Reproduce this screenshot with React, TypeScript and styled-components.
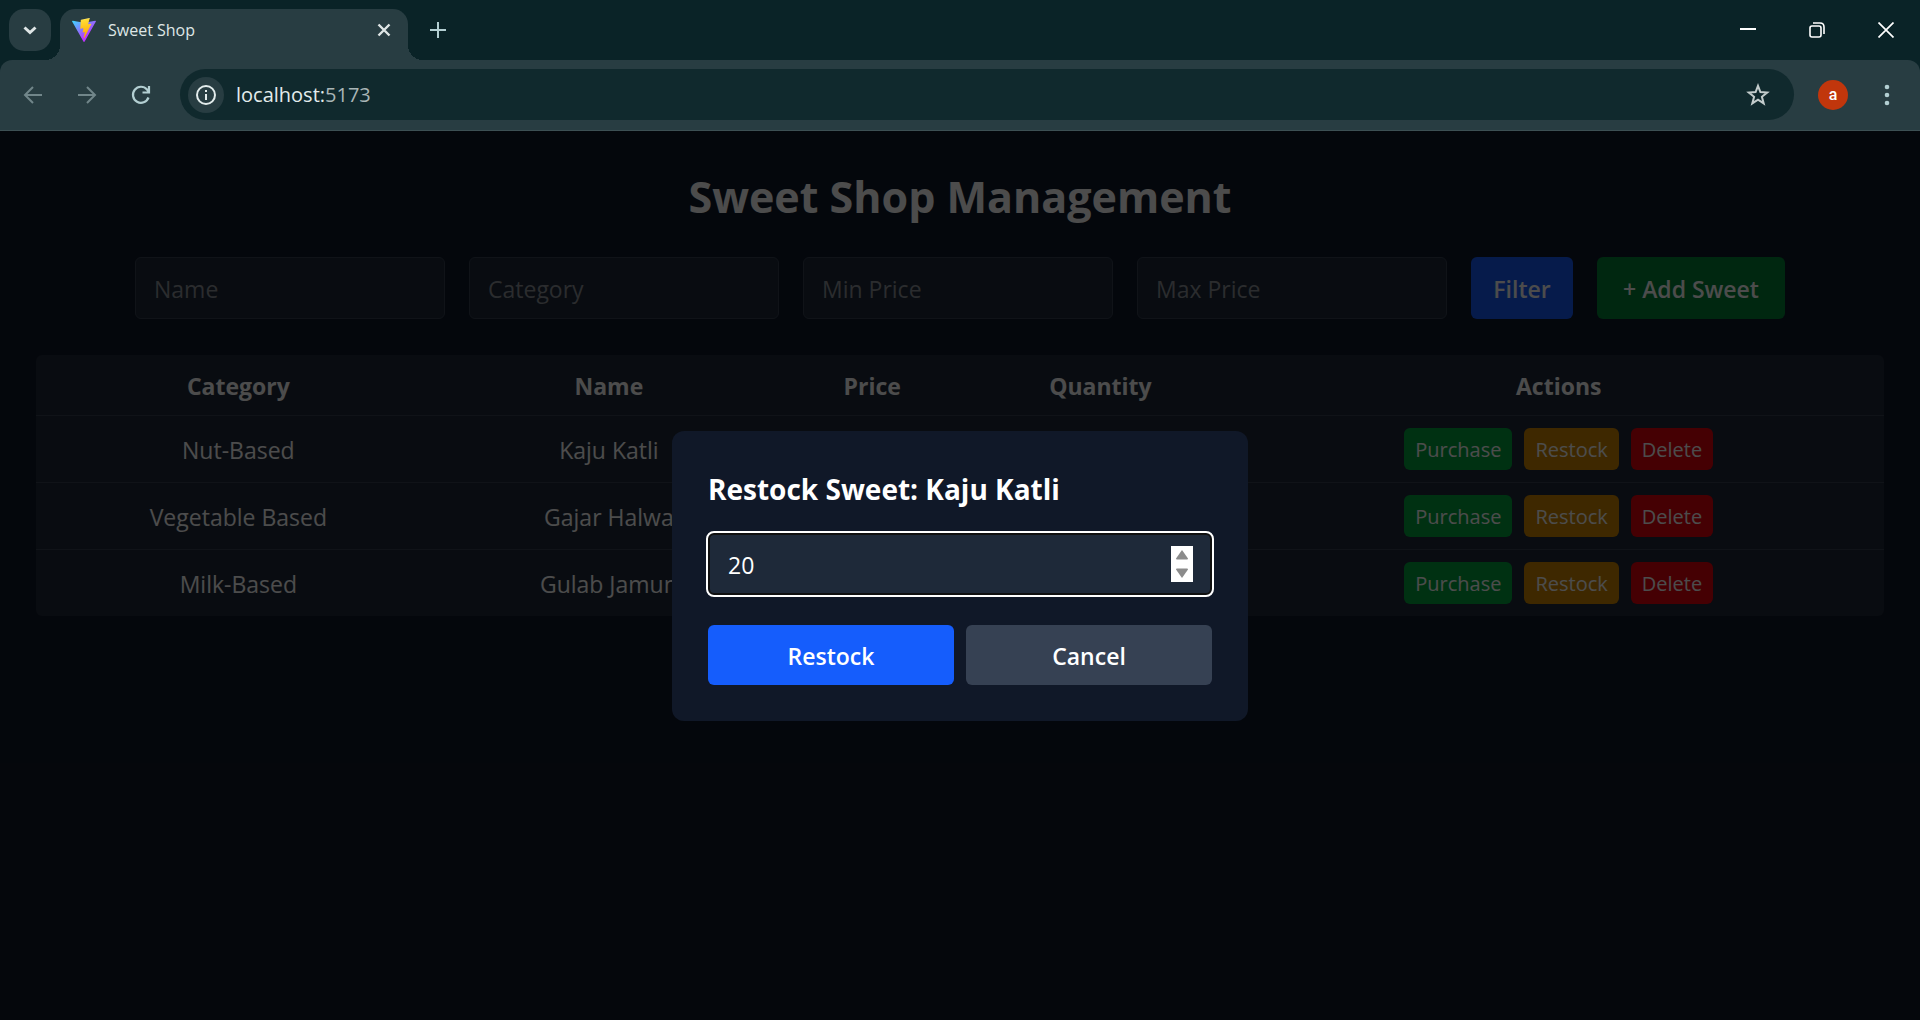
import React, { useState } from "react";
import styled, { createGlobalStyle } from "styled-components";

const GlobalStyle = createGlobalStyle`
  * { box-sizing: border-box; }
  html, body, #root { height: 100%; }
  body {
    margin: 0;
    background: #101828;
    font-family: "Open Sans", "Noto Sans", sans-serif;
  }
  button, input { font-family: inherit; }
  button { border: 0; cursor: pointer; }
`;

const Window = styled.div`
  display: flex;
  flex-direction: column;
  min-height: 100%;
`;

/* ---------- Browser frame ---------- */

const TabStrip = styled.header`
  display: flex;
  height: 60px;
  padding-left: 9px;
  background: #0a2327;
`;

const TabSearch = styled.button`
  display: grid;
  place-items: center;
  width: 42px;
  height: 42px;
  margin: 9px 9px 0 0;
  padding: 0;
  border-radius: 15px;
  background: #283d42;
`;

const Tab = styled.div`
  position: relative;
  display: flex;
  align-items: center;
  width: 348px;
  height: 51px;
  margin-top: 9px;
  padding: 0 12px 9px;
  border-radius: 15px 15px 0 0;
  background: #283d42;
  color: #dfe6e6;
  font-size: 16px;

  &::before,
  &::after {
    content: "";
    position: absolute;
    bottom: 0;
    width: 15px;
    height: 15px;
  }
  &::before {
    right: 100%;
    background: radial-gradient(circle at 0 0, transparent 15px, #283d42 15px);
  }
  &::after {
    left: 100%;
    background: radial-gradient(circle at 100% 0, transparent 15px, #283d42 15px);
  }
`;

const TabTitle = styled.span`
  flex: 1;
  margin-left: 12px;
  line-height: 24px;
`;

const PlainButton = styled.button<{ $size: number }>`
  display: grid;
  place-items: center;
  width: ${(p) => p.$size}px;
  height: ${(p) => p.$size}px;
  padding: 0;
  border-radius: 50%;
  background: transparent;
`;

const NewTabSlot = styled.div`
  display: flex;
  margin: 9px auto 0 9px;
`;

const WindowControl = styled.button`
  display: grid;
  place-items: center;
  width: 69px;
  height: 60px;
  padding: 0;
  background: transparent;
`;

const ToolbarBack = styled.div`
  background: #0a2327;
`;

const Toolbar = styled.nav`
  display: flex;
  align-items: center;
  gap: 12px;
  height: 71px;
  padding: 0 12px 1px;
  border-bottom: 1px solid #3d5054;
  border-radius: 12px 12px 0 0;
  background: #283d42;
`;

const AddressBar = styled.div`
  display: flex;
  flex: 1;
  align-items: center;
  height: 51px;
  margin-left: 6px;
  padding: 0 15px 0 8px;
  border-radius: 26px;
  background: #10292d;
`;

const SiteInfo = styled.button`
  display: grid;
  place-items: center;
  width: 36px;
  height: 36px;
  padding: 0;
  border-radius: 50%;
  background: #283d42;
`;

const Url = styled.span`
  flex: 1;
  margin-left: 12px;
  color: #e3ecec;
  font-size: 20px;
  line-height: 30px;
`;

const Port = styled.span`
  color: #a9b5b6;
`;

const Avatar = styled.button`
  width: 30px;
  height: 30px;
  margin: 0 6px 0 12px;
  padding: 0;
  border-radius: 50%;
  background: #c1360c;
  color: #fff;
  font-family: Roboto, sans-serif;
  font-size: 16px;
  font-weight: 500;
  line-height: 30px;
`;

/* ---------- Page ---------- */

const Page = styled.div`
  position: relative;
  flex: 1;
  padding: 36px;
  color: #fff;
  background: #101828;
`;

const Heading = styled.h1`
  margin: 0 0 30px;
  font-size: 43px;
  font-weight: 700;
  line-height: 60px;
  text-align: center;
`;

const Filters = styled.form`
  display: flex;
  justify-content: center;
  gap: 24px;
  margin-bottom: 36px;
`;

const Field = styled.input`
  width: 310px;
  height: 62px;
  padding: 13px 18px 11px;
  border: 1px solid #364153;
  border-radius: 6px;
  outline: 0;
  background: #1e2939;
  color: #fff;
  font-size: 23px;

  &::placeholder { color: #8f949c; opacity: 1; }
`;

const ActionButton = styled.button<{ $color: string; $width?: number }>`
  flex: ${(p) => (p.$width ? "none" : "1")};
  width: ${(p) => (p.$width ? p.$width + "px" : "auto")};
  padding: 13px 0 11px;
  border-radius: 6px;
  background: ${(p) => p.$color};
  color: #fff;
  font-size: 23px;
  font-weight: 600;
  line-height: 36px;
  white-space: nowrap;
`;

const SweetTable = styled.table`
  width: 100%;
  table-layout: fixed;
  border-spacing: 0;
  border-radius: 6px;
  overflow: hidden;
  background: #1e2939;
  font-size: 23px;
  line-height: 36px;
  text-align: center;
`;

const Column = styled.col<{ $share: number }>`
  width: ${(p) => p.$share}%;
`;

const HeadCell = styled.th`
  padding: 13px 12px 11px;
  font-weight: 700;
`;

const Cell = styled.td`
  padding: 13px 12px 11px;
  border-top: 1px solid #364153;
`;

const ActionsCell = styled(Cell)`
  padding: 12px;
`;

const RowActions = styled.div`
  display: flex;
  justify-content: center;
  gap: 12px;
`;

const RowButton = styled.button<{ $color: string }>`
  padding: 7px 11px 5px;
  border-radius: 6px;
  background: ${(p) => p.$color};
  color: #fff;
  font-size: 20px;
  line-height: 30px;
`;

const Overlay = styled.div`
  position: absolute;
  inset: 0;
  display: grid;
  place-items: center;
  background: rgba(0, 0, 0, 0.7);
`;

const Dialog = styled.form`
  width: 576px;
  padding: 36px;
  border-radius: 12px;
  background: #101828;
`;

const DialogTitle = styled.h2`
  margin: 0 0 22px;
  font-size: 28px;
  font-weight: 700;
  line-height: 44px;
`;

const StepperField = styled.div`
  position: relative;
  margin-bottom: 30px;
`;

const QuantityInput = styled(Field)`
  display: block;
  width: 100%;
  border: 2px solid #101010;
  outline: 2px solid #fff;
  appearance: textfield;

  &::-webkit-inner-spin-button { appearance: none; margin: 0; }
`;

const Stepper = styled.div`
  position: absolute;
  top: 13px;
  right: 19px;
  display: grid;
  width: 22px;
  height: 36px;
  background: #fff;
`;

const StepButton = styled.button`
  display: grid;
  place-items: center;
  padding: 0;
  background: transparent;
`;

const DialogActions = styled.div`
  display: flex;
  gap: 12px;
`;

const sweets = [
  { category: "Nut-Based", name: "Kaju Katli" },
  { category: "Vegetable Based", name: "Gajar Halwa" },
  { category: "Milk-Based", name: "Gulab Jamun" },
];

const ViteLogo = () => (
  <svg width="24" height="24" viewBox="0 0 256 257" aria-hidden="true">
    <defs>
      <linearGradient id="viteBody" x1="-.828%" x2="57.636%" y1="7.652%" y2="78.411%">
        <stop offset="0%" stopColor="#41D1FF" />
        <stop offset="100%" stopColor="#BD34FE" />
      </linearGradient>
      <linearGradient id="viteBolt" x1="43.376%" x2="50.316%" y1="2.242%" y2="89.03%">
        <stop offset="0%" stopColor="#FFEA83" />
        <stop offset="8.333%" stopColor="#FFDD35" />
        <stop offset="100%" stopColor="#FFA800" />
      </linearGradient>
    </defs>
    <path fill="url(#viteBody)" d="M255.153 37.938L134.897 252.976c-2.483 4.44-8.862 4.466-11.382.048L.875 37.958c-2.746-4.814 1.371-10.646 6.827-9.67l120.385 21.517a6.537 6.537 0 0 0 2.322-.004l117.867-21.483c5.438-.991 9.574 4.796 6.877 9.62Z" />
    <path fill="url(#viteBolt)" d="M185.432.063L96.44 17.501a3.268 3.268 0 0 0-2.634 3.014l-5.474 92.456a3.268 3.268 0 0 0 3.997 3.378l24.777-5.718c2.318-.535 4.413 1.507 3.936 3.838l-7.361 36.047c-.495 2.426 1.782 4.5 4.151 3.78l15.304-4.649c2.372-.72 4.652 1.36 4.15 3.788l-11.698 56.621c-.732 3.542 3.979 5.473 5.943 2.437l1.313-2.028l72.516-144.72c1.215-2.423-.88-5.186-3.54-4.672l-25.505 4.922c-2.396.462-4.435-1.77-3.759-4.114l16.646-57.705c.677-2.35-1.37-4.583-3.769-4.113Z" />
  </svg>
);

const Stroke = ({ d, size, color, width = 2 }: { d: string; size: number; color: string; width?: number }) => (
  <svg width={size} height={size} viewBox={`0 0 ${size} ${size}`} fill="none" stroke={color} strokeWidth={width} aria-hidden="true">
    <path d={d} />
  </svg>
);

const BrowserFrame = () => (
  <>
    <TabStrip>
      <TabSearch aria-label="Search tabs">
        <Stroke size={16} color="#dfe6e6" width={3} d="M2.5 5.5 8 10.5l5.500-5" />
      </TabSearch>
      <Tab>
        <ViteLogo />
        <TabTitle>Sweet Shop</TabTitle>
        <PlainButton $size={24} aria-label="Close tab">
          <Stroke size={14} color="#dfe6e6" width={2.4} d="M1.500 1.500 12.500 12.500M12.500 1.500 1.500 12.500" />
        </PlainButton>
      </Tab>
      <NewTabSlot>
        <PlainButton $size={42} aria-label="New tab">
          <Stroke size={16} color="#b3cfd2" d="M8 0v16M0 8h16" />
        </PlainButton>
      </NewTabSlot>
      <WindowControl aria-label="Minimize">
        <Stroke size={16} color="#fff" d="M0 7h16" />
      </WindowControl>
      <WindowControl aria-label="Restore window">
        <Stroke size={16} color="#fff" width={1.6} d="M3 4h7q2 0 2 2v7q0 2-2 2H3q-2 0-2-2V6q0-2 2-2zM4 1h7q4 0 4 4v7" />
      </WindowControl>
      <WindowControl aria-label="Close window">
        <Stroke size={16} color="#fff" width={1.7} d="M.5.5l15 15M15.500.500l-15 15" />
      </WindowControl>
    </TabStrip>
    <ToolbarBack>
      <Toolbar aria-label="Browser toolbar">
        <PlainButton $size={42} aria-label="Back">
          <Stroke size={20} color="#71868a" d="M19 10H2M10 2 2 10l8 8" />
        </PlainButton>
        <PlainButton $size={42} aria-label="Forward">
          <Stroke size={20} color="#71868a" d="M1 10h17M10 2l8 8-8 8" />
        </PlainButton>
        <PlainButton $size={42} aria-label="Reload">
          <Stroke size={20} color="#b3cfd2" width={2.2} d="M17.500 12.500A8 8 0 1 1 16 4.500L18 7M18 1v6.500H11.500" />
        </PlainButton>
        <AddressBar>
          <SiteInfo aria-label="View site information">
            <svg width="20" height="20" viewBox="0 0 20 20" fill="none" stroke="#e3ecec" strokeWidth="2" aria-hidden="true">
              <circle cx="10" cy="10" r="9" />
              <path d="M10 9v6M10 5v2" />
            </svg>
          </SiteInfo>
          <Url>
            localhost:<Port>5173</Port>
          </Url>
          <PlainButton $size={42} aria-label="Bookmark this tab">
            <Stroke size={24} color="#c3cccc" d="M12 2.800l2.400 6.300 6.800.4-5.300 4.300 1.800 6.600-5.700-3.700-5.700 3.700 1.800-6.600L2.800 9.500l6.800-.4z" />
          </PlainButton>
        </AddressBar>
        <Avatar aria-label="Profile">a</Avatar>
        <PlainButton $size={42} aria-label="Browser menu">
          <svg width="6" height="22" viewBox="0 0 6 22" fill="#b3cfd2" aria-hidden="true">
            <circle cx="3" cy="3" r="2.300" />
            <circle cx="3" cy="11" r="2.300" />
            <circle cx="3" cy="19" r="2.300" />
          </svg>
        </PlainButton>
      </Toolbar>
    </ToolbarBack>
  </>
);

export default function App() {
  const [quantity, setQuantity] = useState(20);
  const stop = (e: React.FormEvent) => e.preventDefault();

  return (
    <Window>
      <GlobalStyle />
      <BrowserFrame />
      <Page>
        <Heading>Sweet Shop Management</Heading>
        <Filters onSubmit={stop}>
          {["Name", "Category", "Min Price", "Max Price"].map((label) => (
            <Field key={label} placeholder={label} aria-label={label} />
          ))}
          <ActionButton type="submit" $color="#155dfc" $width={102}>Filter</ActionButton>
          <ActionButton type="button" $color="#008236" $width={188}>+ Add Sweet</ActionButton>
        </Filters>
        <SweetTable>
          <colgroup>
            {[21.9, 18.2, 10.3, 14.4, 35.2].map((share, i) => (
              <Column key={i} $share={share} />
            ))}
          </colgroup>
          <thead>
            <tr>
              {["Category", "Name", "Price", "Quantity", "Actions"].map((label) => (
                <HeadCell key={label} scope="col">{label}</HeadCell>
              ))}
            </tr>
          </thead>
          <tbody>
            {sweets.map((sweet) => (
              <tr key={sweet.name}>
                <Cell>{sweet.category}</Cell>
                <Cell>{sweet.name}</Cell>
                <Cell />
                <Cell />
                <ActionsCell>
                  <RowActions>
                    <RowButton $color="#00a63e">Purchase</RowButton>
                    <RowButton $color="#d08700">Restock</RowButton>
                    <RowButton $color="#e7000b">Delete</RowButton>
                  </RowActions>
                </ActionsCell>
              </tr>
            ))}
          </tbody>
        </SweetTable>
        <Overlay>
          <Dialog role="dialog" aria-labelledby="restock-title" onSubmit={stop}>
            <DialogTitle id="restock-title">Restock Sweet: Kaju Katli</DialogTitle>
            <StepperField>
              <QuantityInput
                type="number"
                aria-label="Quantity"
                value={quantity}
                onChange={(e) => setQuantity(Number(e.target.value))}
              />
              <Stepper>
                <StepButton type="button" aria-label="Increase" onClick={() => setQuantity(quantity + 1)}>
                  <svg width="12" height="10" viewBox="0 0 12 10" fill="#8b8b8b" aria-hidden="true">
                    <path d="M6 0 12 8.500Q12 9.500 11 9.500H1Q0 9.500 0 8.500z" />
                  </svg>
                </StepButton>
                <StepButton type="button" aria-label="Decrease" onClick={() => setQuantity(quantity - 1)}>
                  <svg width="12" height="10" viewBox="0 0 12 10" fill="#8b8b8b" aria-hidden="true">
                    <path d="M6 10 12 1.500Q12 .5 11 .5H1Q0 .5 0 1.500z" />
                  </svg>
                </StepButton>
              </Stepper>
            </StepperField>
            <DialogActions>
              <ActionButton type="submit" $color="#155dfc">Restock</ActionButton>
              <ActionButton type="button" $color="#364153">Cancel</ActionButton>
            </DialogActions>
          </Dialog>
        </Overlay>
      </Page>
    </Window>
  );
}
